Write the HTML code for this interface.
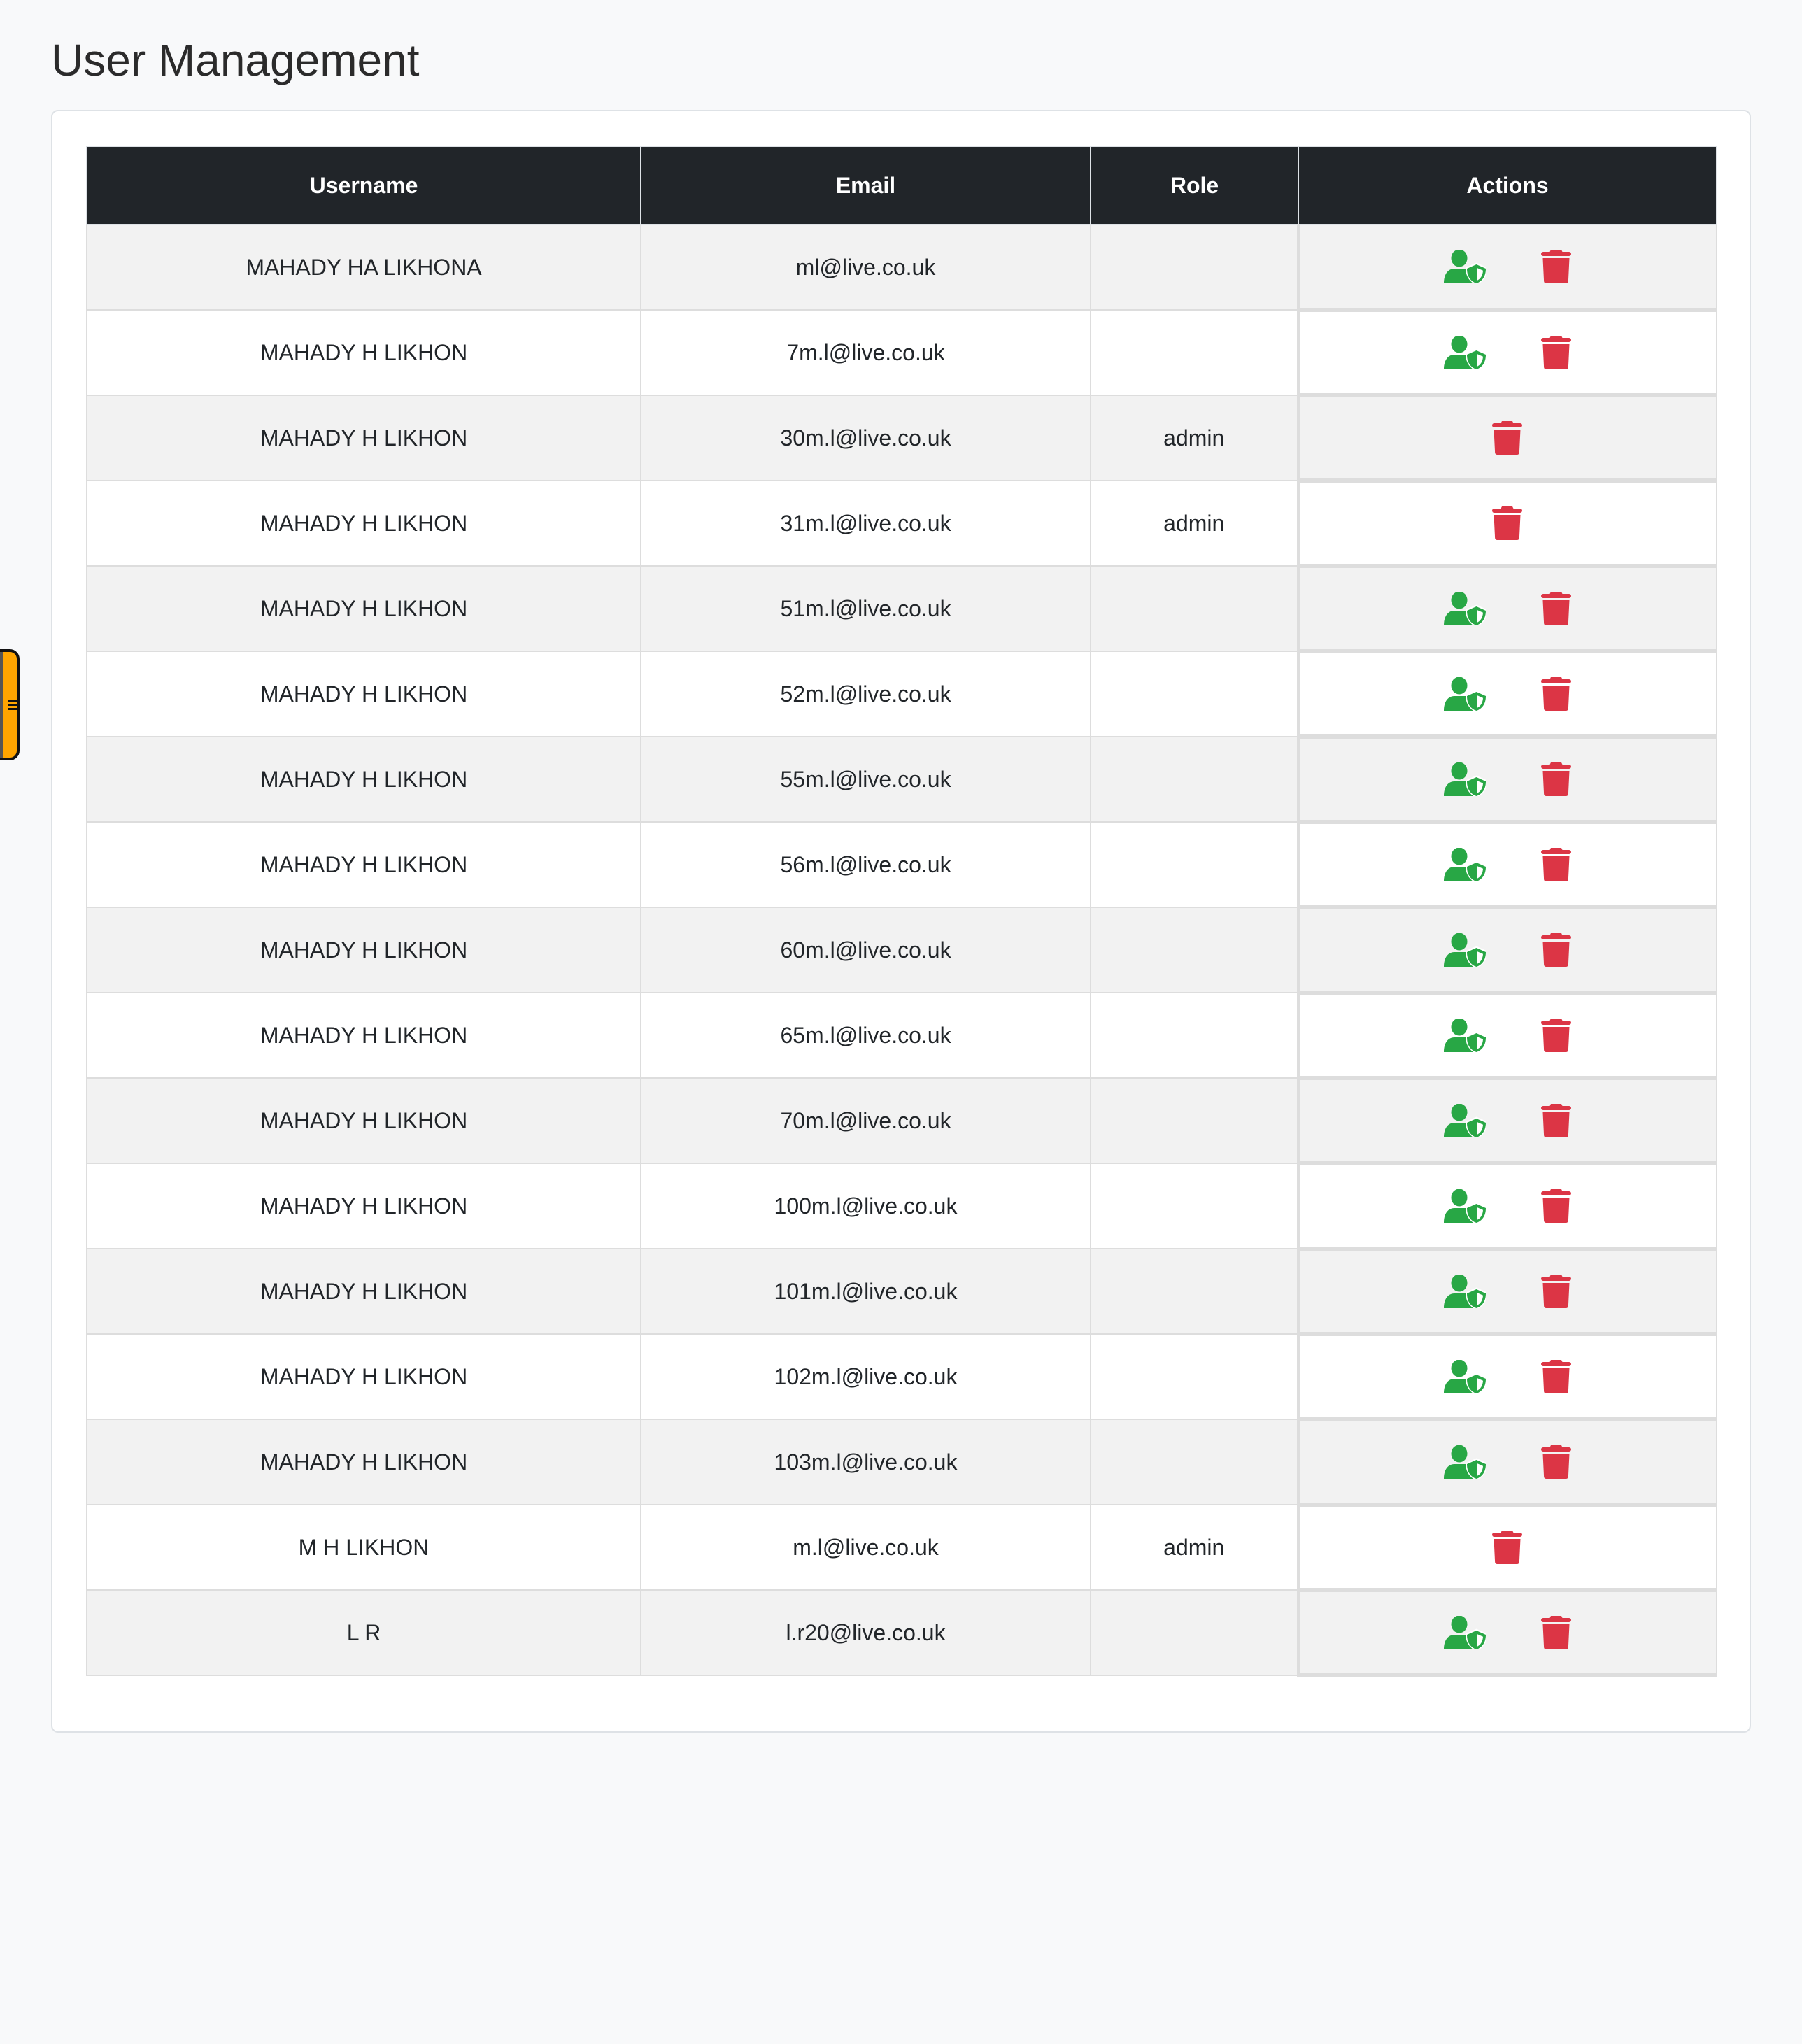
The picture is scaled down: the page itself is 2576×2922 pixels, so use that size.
<!DOCTYPE html>
<html><head><meta charset="utf-8"><style>
*{box-sizing:border-box;margin:0;padding:0}
body{width:2576px;height:2922px;background:#f8f9fa;font-family:"Liberation Sans",Arial,sans-serif;color:#212529;position:relative;overflow:hidden}
h1{position:absolute;left:73px;top:48px;font-size:64px;font-weight:400;line-height:76px;color:#2b2b2b}
.card{position:absolute;left:73px;top:157px;width:2430px;height:2320px;background:#fff;border:2px solid #dee2e6;border-radius:10px}
table{position:absolute;left:123px;top:208px;border-collapse:collapse;table-layout:fixed;width:2330px}
th,td{border:2px solid #dddddd;text-align:center;font-size:32px;vertical-align:middle}
th{background:#212529;color:#fff;font-weight:700;height:112px;border-color:#dee2e6}
td{height:122px}
tr:nth-child(even) td{background:#f2f2f2}
tr:nth-child(odd) td{background:#fff}
td.a{border-left:5px solid #dddddd;border-bottom:6px solid #dddddd;position:relative}
.ic{position:absolute;top:50%;margin-top:-24px}
.u{left:205px}
.t{left:344px}
.t1{left:274px}
.tab{position:absolute;left:-10px;top:928px;width:38px;height:159px;background:#ffa500;border:4px solid #111;border-radius:0 14px 14px 0}
.tab:before{content:"";position:absolute;left:0;top:0;bottom:0;width:10px;background:#555}
.tab i{position:absolute;left:17px;width:18px;height:3px;background:#111}
</style></head><body>
<h1>User Management</h1>
<div class="tab"><i style="top:68px"></i><i style="top:74px"></i><i style="top:80px"></i></div>
<div class="card"></div>
<svg width="0" height="0" style="position:absolute"><defs>
<symbol id="us" viewBox="0 0 60 48"><ellipse cx="22" cy="12" rx="11.5" ry="12.5" fill="#28a745"/><path d="M0,48 C0,35 6,27 15,27 L33,27 C34,38 37,44 42,48 Z" fill="#28a745"/><path d="M46.5,18.5 L62,25.5 C62,38 56,46.5 46.5,50 C37,46.5 31,38 31,25.5 Z" fill="#fff"/><path d="M46.5,21 L60,27 C60,38 55,45 46.5,48 C38,45 33,38 33,27 Z" fill="#28a745"/><path d="M47.5,26 L56,29.8 C55.5,37 52.5,41.5 47.5,44 Z" fill="#fff"/></symbol>
<symbol id="tr" viewBox="0 0 43 48"><path d="M14,0 h15 l1.5,3 h-18 Z" fill="#dc3545"/><rect x="0" y="3" width="43" height="6" rx="3" fill="#dc3545"/><path d="M2.5,12 h38 l-1.6,33 a3,3 0 0 1 -3,3 h-28.8 a3,3 0 0 1 -3,-3 Z" fill="#dc3545"/></symbol>
</defs></svg>
<table>
<colgroup><col style="width:792px"><col style="width:643px"><col style="width:297px"><col style="width:598px"></colgroup>
<tr><th>Username</th><th>Email</th><th>Role</th><th>Actions</th></tr>
<tr><td>MAHADY HA LIKHONA</td><td>ml@live.co.uk</td><td></td><td class="a"><svg class="ic u" width="60" height="48"><use href="#us"/></svg><svg class="ic t" width="43" height="48"><use href="#tr"/></svg></td></tr>
<tr><td>MAHADY H LIKHON</td><td>7m.l@live.co.uk</td><td></td><td class="a"><svg class="ic u" width="60" height="48"><use href="#us"/></svg><svg class="ic t" width="43" height="48"><use href="#tr"/></svg></td></tr>
<tr><td>MAHADY H LIKHON</td><td>30m.l@live.co.uk</td><td>admin</td><td class="a"><svg class="ic t1" width="43" height="48"><use href="#tr"/></svg></td></tr>
<tr><td>MAHADY H LIKHON</td><td>31m.l@live.co.uk</td><td>admin</td><td class="a"><svg class="ic t1" width="43" height="48"><use href="#tr"/></svg></td></tr>
<tr><td>MAHADY H LIKHON</td><td>51m.l@live.co.uk</td><td></td><td class="a"><svg class="ic u" width="60" height="48"><use href="#us"/></svg><svg class="ic t" width="43" height="48"><use href="#tr"/></svg></td></tr>
<tr><td>MAHADY H LIKHON</td><td>52m.l@live.co.uk</td><td></td><td class="a"><svg class="ic u" width="60" height="48"><use href="#us"/></svg><svg class="ic t" width="43" height="48"><use href="#tr"/></svg></td></tr>
<tr><td>MAHADY H LIKHON</td><td>55m.l@live.co.uk</td><td></td><td class="a"><svg class="ic u" width="60" height="48"><use href="#us"/></svg><svg class="ic t" width="43" height="48"><use href="#tr"/></svg></td></tr>
<tr><td>MAHADY H LIKHON</td><td>56m.l@live.co.uk</td><td></td><td class="a"><svg class="ic u" width="60" height="48"><use href="#us"/></svg><svg class="ic t" width="43" height="48"><use href="#tr"/></svg></td></tr>
<tr><td>MAHADY H LIKHON</td><td>60m.l@live.co.uk</td><td></td><td class="a"><svg class="ic u" width="60" height="48"><use href="#us"/></svg><svg class="ic t" width="43" height="48"><use href="#tr"/></svg></td></tr>
<tr><td>MAHADY H LIKHON</td><td>65m.l@live.co.uk</td><td></td><td class="a"><svg class="ic u" width="60" height="48"><use href="#us"/></svg><svg class="ic t" width="43" height="48"><use href="#tr"/></svg></td></tr>
<tr><td>MAHADY H LIKHON</td><td>70m.l@live.co.uk</td><td></td><td class="a"><svg class="ic u" width="60" height="48"><use href="#us"/></svg><svg class="ic t" width="43" height="48"><use href="#tr"/></svg></td></tr>
<tr><td>MAHADY H LIKHON</td><td>100m.l@live.co.uk</td><td></td><td class="a"><svg class="ic u" width="60" height="48"><use href="#us"/></svg><svg class="ic t" width="43" height="48"><use href="#tr"/></svg></td></tr>
<tr><td>MAHADY H LIKHON</td><td>101m.l@live.co.uk</td><td></td><td class="a"><svg class="ic u" width="60" height="48"><use href="#us"/></svg><svg class="ic t" width="43" height="48"><use href="#tr"/></svg></td></tr>
<tr><td>MAHADY H LIKHON</td><td>102m.l@live.co.uk</td><td></td><td class="a"><svg class="ic u" width="60" height="48"><use href="#us"/></svg><svg class="ic t" width="43" height="48"><use href="#tr"/></svg></td></tr>
<tr><td>MAHADY H LIKHON</td><td>103m.l@live.co.uk</td><td></td><td class="a"><svg class="ic u" width="60" height="48"><use href="#us"/></svg><svg class="ic t" width="43" height="48"><use href="#tr"/></svg></td></tr>
<tr><td>M H LIKHON</td><td>m.l@live.co.uk</td><td>admin</td><td class="a"><svg class="ic t1" width="43" height="48"><use href="#tr"/></svg></td></tr>
<tr><td>L R</td><td>l.r20@live.co.uk</td><td></td><td class="a"><svg class="ic u" width="60" height="48"><use href="#us"/></svg><svg class="ic t" width="43" height="48"><use href="#tr"/></svg></td></tr>
</table>
</body></html>
